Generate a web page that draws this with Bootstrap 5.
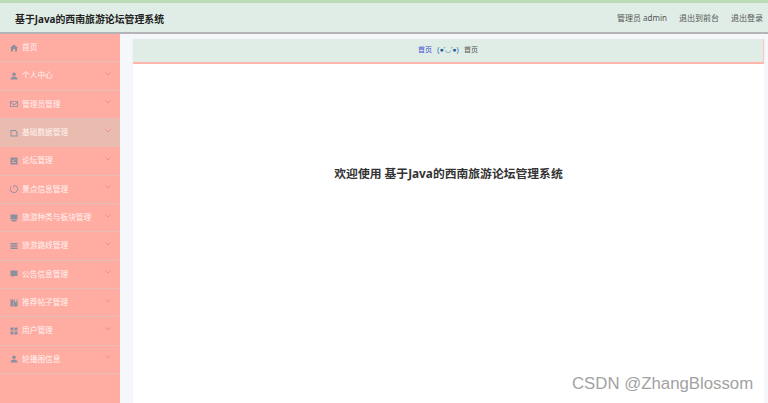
<!DOCTYPE html>
<html lang="zh">
<head>
<meta charset="utf-8">
<title>基于Java的西南旅游论坛管理系统</title>
<link href="https://cdn.jsdelivr.net/npm/bootstrap@5.3.0/dist/css/bootstrap.min.css" rel="stylesheet">
<style>
html,body{height:403px;overflow:hidden;}
body{font-family:"Noto Sans","Noto Sans CJK SC",sans-serif;background:#f5f7fb;position:relative;}
.top-bar{height:34px;background:#e0ede6;border-top:3px solid #bcdcb8;border-bottom:2px solid #b4b4b8;padding:0 5px 0 15px;}
.top-title{font-size:9.9px;font-weight:700;color:#222;padding-top:3px;}
.top-link{font-size:8px;color:#555;gap:12px;}
.shell{height:369px;}
.side{width:120px;flex:none;background:#ffaca3;}
.side-item{height:28.33px;padding:0 9px 0 10px;border-bottom:1px solid #e8bdb6;color:#fff3f0;font-size:7.7px;gap:4px;}
.side-item.is-hover{background:#eabcb0;}
.side-item svg.ico{width:8px;height:8px;flex:none;fill:#8b8f9e;}
.side-item svg.chev{width:6px;height:4px;flex:none;fill:none;stroke:#f78791;stroke-width:1;margin-left:auto;margin-top:-4px;}
.main-area{flex:1;padding:5px 4px 0 13px;}
.crumb{height:25px;background:#e0ede6;border-bottom:2px solid #ffb5aa;border-right:1px solid #ffc5bc;font-size:7px;color:#555;gap:5px;box-shadow:0 1px 3px rgba(0,0,0,.06);}
.crumb-first{color:#3f51d8;}
.crumb-face{color:#1c5f9c;font-family:"Liberation Sans","Noto Sans CJK SC",sans-serif;}
.panel{background:#fff;height:339px;padding-top:101px;}
.welcome{font-size:11.8px;font-weight:700;color:#333;}
.mark-csdn{position:absolute;left:572px;top:375px;font-size:16.8px;line-height:18px;color:#a2a2a2;font-family:"Liberation Sans",sans-serif;}
</style>
</head>
<body>
<header class="top-bar d-flex align-items-center justify-content-between">
  <div class="top-title">基于Java的西南旅游论坛管理系统</div>
  <div class="d-flex top-link"><span>管理员 admin</span><span>退出到前台</span><span>退出登录</span></div>
</header>
<div class="shell d-flex">
  <nav class="side">
    <div class="side-item d-flex align-items-center"><svg class="ico" viewBox="0 0 16 16"><path d="M8 1 0 8h2v7h4v-5h4v5h4V8h2z"/></svg>首页</div>
    <div class="side-item d-flex align-items-center"><svg class="ico" viewBox="0 0 16 16"><circle cx="8" cy="4.5" r="3.5"/><path d="M1 15c0-4 3-6 7-6s7 2 7 6z"/></svg>个人中心<svg class="chev" viewBox="0 0 6 4"><path d="M.5.5 3 3 5.5.5"/></svg></div>
    <div class="side-item d-flex align-items-center"><svg class="ico" viewBox="0 0 16 16"><path fill-rule="evenodd" d="M0 2h16v12H0zm1.500 1.500v.6L8 9l6.500-4.900v-.6zm13 2.400L8 10.800 1.500 5.900v6.600h13z"/></svg>管理员管理<svg class="chev" viewBox="0 0 6 4"><path d="M.5.5 3 3 5.500.5"/></svg></div>
    <div class="side-item is-hover d-flex align-items-center"><svg class="ico" viewBox="0 0 16 16"><path fill-rule="evenodd" d="M1 2h10l4 4v9H1zm2 2v9h10V7l-3-3z"/></svg>基础数据管理<svg class="chev" viewBox="0 0 6 4"><path d="M.5.5 3 3 5.500.5"/></svg></div>
    <div class="side-item d-flex align-items-center"><svg class="ico" viewBox="0 0 16 16"><path fill-rule="evenodd" d="M1 1h14v14H1zm3 9v1.500h8V10zm0-3 2 2 5-4-1-1-4 3-1-1z"/></svg>论坛管理<svg class="chev" viewBox="0 0 6 4"><path d="M.5.5 3 3 5.500.5"/></svg></div>
    <div class="side-item d-flex align-items-center"><svg class="ico" viewBox="0 0 16 16"><path fill-rule="evenodd" d="M8 0a8 8 0 1 1-6 2.700l1 1A6.500 6.500 0 1 0 8 1.500z"/><path d="M7.300 0h1.400v6H7.300z"/></svg>景点信息管理<svg class="chev" viewBox="0 0 6 4"><path d="M.5.5 3 3 5.500.5"/></svg></div>
    <div class="side-item d-flex align-items-center"><svg class="ico" viewBox="0 0 16 16"><path d="M1 1h14v10H1zM3 12h10v3H3z"/></svg>旅游种类与板块管理<svg class="chev" viewBox="0 0 6 4"><path d="M.5.5 3 3 5.500.5"/></svg></div>
    <div class="side-item d-flex align-items-center"><svg class="ico" viewBox="0 0 16 16"><path d="M1 2h14v3H1zM1 6.500h14v3H1zM1 11h14v3H1z"/></svg>旅游路线管理<svg class="chev" viewBox="0 0 6 4"><path d="M.5.5 3 3 5.500.5"/></svg></div>
    <div class="side-item d-flex align-items-center"><svg class="ico" viewBox="0 0 16 16"><path d="M1 1h14v11H7l-3 3v-3H1z"/></svg>公告信息管理<svg class="chev" viewBox="0 0 6 4"><path d="M.5.5 3 3 5.500.5"/></svg></div>
    <div class="side-item d-flex align-items-center"><svg class="ico" viewBox="0 0 16 16"><path d="M1 1h5v14H1zM7 1h3v6l1.500-1L13 7V1h2v14H7z"/></svg>推荐帖子管理<svg class="chev" viewBox="0 0 6 4"><path d="M.5.5 3 3 5.500.5"/></svg></div>
    <div class="side-item d-flex align-items-center"><svg class="ico" viewBox="0 0 16 16"><path d="M1 1h6v6H1zM9 1h6v6H9zM1 9h6v6H1zM9 9h6v6H9z"/></svg>用户管理<svg class="chev" viewBox="0 0 6 4"><path d="M.5.5 3 3 5.500.5"/></svg></div>
    <div class="side-item d-flex align-items-center"><svg class="ico" viewBox="0 0 16 16"><circle cx="8" cy="4.500" r="3.500"/><path d="M1 15c0-4 3-6 7-6s7 2 7 6z"/></svg>轮播图信息<svg class="chev" viewBox="0 0 6 4"><path d="M.5.5 3 3 5.500.5"/></svg></div>
  </nav>
  <main class="main-area">
    <div class="crumb d-flex align-items-center justify-content-center"><span class="crumb-first">首页</span><span class="crumb-face">(●'◡'●)</span><span>首页</span></div>
    <div class="panel text-center"><div class="welcome">欢迎使用 基于Java的西南旅游论坛管理系统</div></div>
  </main>
</div>
<div class="mark-csdn">CSDN @ZhangBlossom</div>
<script src="https://cdn.jsdelivr.net/npm/bootstrap@5.3.0/dist/js/bootstrap.bundle.min.js"></script>
</body>
</html>
